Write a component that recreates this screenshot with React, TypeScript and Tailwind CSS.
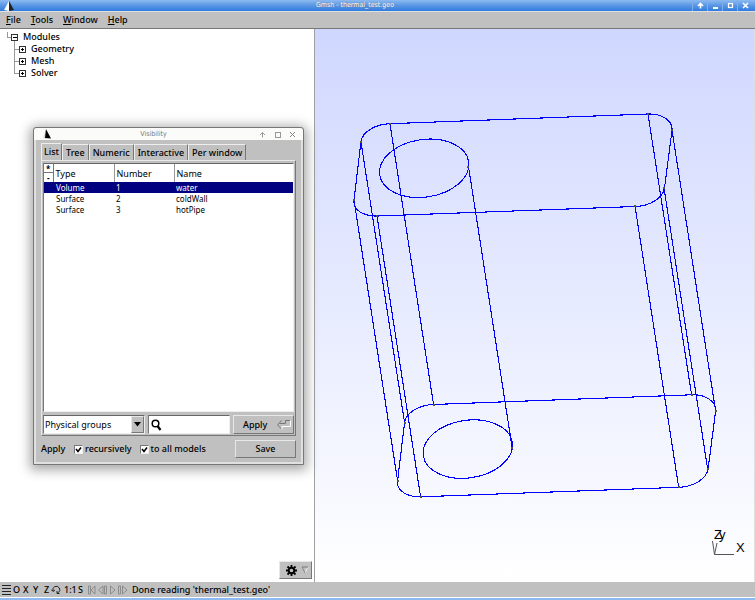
import React from 'react';

const menus = ['File', 'Tools', 'Window', 'Help'];
const tabs = ['List', 'Tree', 'Numeric', 'Interactive', 'Per window'];
const modules = ['Geometry', 'Mesh', 'Solver'];

const groups = [
  { type: 'Volume', number: 1, name: 'water' },
  { type: 'Surface', number: 2, name: 'coldWall' },
  { type: 'Surface', number: 3, name: 'hotPipe' },
];

const vertices = [
  [390, 124], [648, 114], [672, 130], [664, 188], [635, 206], [377, 216], [354, 200], [361, 142],
];

const raised = 'bg-[#c0c0c0] border border-t-[#e8e8e8] border-l-[#e8e8e8] border-b-[#777] border-r-[#777]';

const GmshLogo: React.FC = () => (
  <svg width="12" height="10" viewBox="0 0 12 10" aria-hidden="true">
    <path d="M6 0 L1 9 L6 10 Z" fill="#fff" />
    <path d="M6 0 L6 10 L11 9 Z" fill="#222" />
  </svg>
);

const TreeRoot: React.FC = () => (
  <svg width="23" height="12" fill="none" shapeRendering="crispEdges" aria-hidden="true">
    <path d="M7.5 1V6.5H11M14.5 10V12" stroke="#999" />
    <rect x="11.5" y="3.5" width="6" height="6" stroke="#333" />
    <path d="M13 6.5H17" stroke="#000" />
  </svg>
);

const TreeChild: React.FC<{ last: boolean }> = ({ last }) => (
  <svg width="31" height="12" fill="none" shapeRendering="crispEdges" aria-hidden="true">
    <path d={last ? 'M14.5 0V6.5H19' : 'M14.5 0V12M14.5 6.5H19'} stroke="#999" />
    <rect x="19.5" y="3.5" width="6" height="6" stroke="#333" />
    <path d="M21 6.5H24M22.5 5V8" stroke="#000" />
  </svg>
);

const Check: React.FC<{ label: string }> = ({ label }) => (
  <label className="flex items-center gap-[2px]">
    <span className="grid h-[9px] w-[9px]">
      <input
        type="checkbox"
        defaultChecked
        className="peer col-start-1 row-start-1 h-[9px] w-[9px] appearance-none border border-t-[#777] border-l-[#777] border-b-[#eee] border-r-[#eee] bg-white"
      />
      <svg viewBox="0 0 9 9" className="pointer-events-none invisible col-start-1 row-start-1 h-[9px] w-[9px] peer-checked:visible">
        <path d="M2 4 L4 6.5 L7 2.5" fill="none" stroke="#000" strokeWidth="1.6" />
      </svg>
    </span>
    <span>{label}</span>
  </label>
);

const TitleBar: React.FC = () => (
  <header className="flex h-[11px] items-center bg-gradient-to-b from-[#8dbaf1] via-[#5997e4] to-[#2f7be0]">
    <div className="flex w-[63px] pl-[3px]">
      <GmshLogo />
    </div>
    <h1 className="flex-1 pr-[45px] text-center font-['DejaVu_Sans_Condensed','DejaVu_Sans',sans-serif] text-[7px] leading-[11px] font-normal text-white [text-shadow:0_0_1px_#124,0_0_1px_#fff]">
      Gmsh - thermal_test.geo
    </h1>
    <div className="flex w-[63px]">
      <button aria-label="Shade" className="flex h-[11px] w-[15px] items-center justify-center border-l border-[#7fb0ee]">
        <svg width="7" height="7" stroke="#fff" strokeWidth="1.6" fill="none"><path d="M3.5 6.5V1.5M1 4L3.5 1.5L6 4" /></svg>
      </button>
      <button aria-label="Minimize" className="flex h-[11px] w-[15px] items-center justify-center border-l border-[#7fb0ee]">
        <svg width="7" height="7"><path d="M1 6H6" stroke="#fff" strokeWidth="2" /></svg>
      </button>
      <button aria-label="Maximize" className="flex h-[11px] w-[15px] items-center justify-center border-l border-[#7fb0ee]">
        <svg width="7" height="7"><rect x="1.5" y="1.5" width="4" height="4" fill="none" stroke="#fff" strokeWidth="1.2" /></svg>
      </button>
      <button aria-label="Close" className="flex h-[11px] w-[15px] items-center justify-center border-l border-[#7fb0ee]">
        <svg width="7" height="7"><path d="M1 1L6 6M6 1L1 6" stroke="#fff" strokeWidth="1.6" /></svg>
      </button>
    </div>
  </header>
);

const Wireframe: React.FC = () => (
  <svg viewBox="315 29 439 553" className="h-full w-full" fill="none" aria-label="Model view">
    <g stroke="#0000ff" strokeWidth="1.1" shapeRendering="crispEdges">
      {[[0, 0], [43.6, 280.8]].map(([x, y]) => (
        <g key={x} transform={`translate(${x} ${y})`}>
          <path d="M390 123.7 L648 114 C661 113.5 673 120 672 130.5 L664.5 188 C663 198 650 206 635.5 206.5 L377.5 216 C364 216.5 352.5 210 354 200 L361 141.5 C362.5 132 375 124.2 390 123.7 Z" />
          <ellipse cx="424.2" cy="168.3" rx="45" ry="28.8" transform="rotate(-8.5 424.2 168.3)" />
        </g>
      ))}
      {vertices.map(([x, y]) => (
        <path key={`${x}-${y}`} d={`M${x} ${y} l43.6 280.8`} />
      ))}
      <path d="M468.5 166.5 l43.6 280.8" />
    </g>
    <g fill="#555544">
      {[...vertices, [468, 167]].map(([x, y]) => (
        <g key={`${x}-${y}`}>
          <rect x={x - 1} y={y - 1} width="2" height="2" />
          <rect x={x + 43} y={y + 280} width="2" height="2" />
        </g>
      ))}
    </g>
    {/* axes */}
    <path d="M712.5 541 L714.5 554.5 H734 M717 543 L714.5 554.5" stroke="#555" />
    <g fill="#000" className="font-['Liberation_Sans',sans-serif] text-[13px] font-normal">
      <text x="736" y="552">X</text>
      <text x="714" y="539">Z</text>
      <text x="719" y="539">y</text>
    </g>
  </svg>
);

const VisibilityDialog: React.FC = () => (
  <section
    aria-label="Visibility"
    className="absolute top-[98px] left-[33px] w-[271px] rounded-t-[3px] border border-[#777] bg-[#c0c0c0] shadow-[0_2px_12px_3px_rgba(0,0,0,0.35)]"
  >
    <header className="flex h-3 items-center rounded-t-[3px] bg-[#fbfbf9] text-[#999]">
      <div className="flex w-11 pl-[7px]">
        <svg width="12" height="10" viewBox="0 0 12 10" aria-hidden="true">
          <path d="M5 0 L2 9 L5 10 Z" fill="#ddd" />
          <path d="M5 0 L4 9 L10 9.5 Z" fill="#000" />
        </svg>
      </div>
      <h2 className="flex-1 pr-[30px] text-center font-['DejaVu_Sans_Condensed','DejaVu_Sans',sans-serif] text-[7px] leading-3 font-normal text-[#777]">
        Visibility
      </h2>
      <div className="flex w-11 gap-2">
        <button aria-label="Shade"><svg width="7" height="7" fill="none" stroke="#999"><path d="M3.5 6.5V1.5M1 4L3.5 1.5L6 4" /></svg></button>
        <button aria-label="Maximize"><svg width="7" height="7" fill="none" stroke="#999"><rect x="1.5" y="1.5" width="5" height="5" /></svg></button>
        <button aria-label="Close"><svg width="7" height="7" fill="none" stroke="#888"><path d="M1 1L6 6M6 1L1 6" /></svg></button>
      </div>
    </header>

    <div className="border-2 border-t-0 border-[#e0e0e0] px-[5px] pt-[3px] pb-[4px]">
      <nav className="flex items-end">
        {tabs.map((tab, i) => (
          <button
            key={tab}
            className={
              i === 0
                ? 'h-[17px] border border-b-0 border-t-[#eee] border-l-[#eee] border-r-[#777] px-[2px]'
                : 'h-4 border border-b-0 border-t-[#eee] border-l-[#eee] border-r-[#777] px-[3px]'
            }
          >
            {tab}
          </button>
        ))}
      </nav>

      <div className="border border-t-[#e8e8e8] border-l-[#e8e8e8] border-b-[#777] border-r-[#777] px-px pt-[2px] pb-px">
        <div className="h-[249px] border border-t-[#666] border-l-[#777] border-b-[#eee] border-r-[#eee] bg-white">
          <table className="w-full table-fixed border-collapse text-left leading-[11px] font-normal">
            <colgroup>
              <col className="w-[9px]" />
              <col className="w-[61px]" />
              <col className="w-[60px]" />
              <col />
            </colgroup>
            <thead>
              <tr>
                <th className="border-r border-[#777] p-0 text-center text-[8px] font-bold">
                  <button className="block h-[9px] w-full border-b border-[#777] leading-[9px]">*</button>
                  <button className="block h-[9px] w-full leading-[8px]">-</button>
                </th>
                <th className="border-r border-[#999] p-0 pl-[2px] font-normal">Type</th>
                <th className="border-r border-[#999] p-0 pl-[2px] font-normal">Number</th>
                <th className="p-0 pl-[2px] font-normal">Name</th>
              </tr>
            </thead>
            <tbody className="text-[8px]">
              {groups.map((g, i) => (
                <tr key={g.number} className={i === 0 ? 'bg-[#000080] text-white' : ''}>
                  <td colSpan={2} className="p-0 pl-3">{g.type}</td>
                  <td className="p-0 pl-[2px]">{g.number}</td>
                  <td className="p-0 pl-[2px]">{g.name}</td>
                </tr>
              ))}
            </tbody>
          </table>
        </div>

        <div className="mt-[3px] flex h-[19px] gap-[3px]">
          <div className="relative w-[102px]">
            <select aria-label="Browse mode" className="h-full w-full appearance-none border border-t-[#666] border-l-[#777] border-b-[#eee] border-r-[#eee] bg-white pl-px font-normal">
              <option>Physical groups</option>
            </select>
            <span className={`pointer-events-none absolute top-px right-px flex h-[17px] w-[13px] items-center justify-center ${raised}`}>
              <svg width="7" height="5"><path d="M0 0H7L3.5 4.5Z" fill="#000" /></svg>
            </span>
          </div>
          <label className="flex w-[82px] items-center border border-t-[#666] border-l-[#777] border-b-[#eee] border-r-[#eee] bg-white pl-[2px]">
            <svg width="11" height="12" fill="none" stroke="#000" aria-hidden="true">
              <circle cx="4.5" cy="4.5" r="3.3" strokeWidth="1.5" />
              <path d="M6.5 7L9.5 11" strokeWidth="2.2" />
            </svg>
            <input aria-label="Search" className="min-w-0 flex-1 bg-transparent outline-none" />
          </label>
          <button className={`flex flex-1 items-center justify-between pl-[9px] ${raised}`}>
            Apply
            <svg width="17" height="12" fill="none" aria-hidden="true">
              <path d="M5.5 1.5L1.5 6L5.5 10M3.5 4.5H9.5V1.5H14" stroke="#777" />
              <path d="M14.5 1.5V7.5H6V10.5" stroke="#fff" />
            </svg>
          </button>
        </div>
      </div>

      <div className="mt-[4px] flex items-center">
        <span className="w-[33px]">Apply</span>
        <div className="flex flex-1 gap-2">
          <Check label="recursively" />
          <Check label="to all models" />
        </div>
        <button className={`h-[18px] w-[61px] ${raised}`}>Save</button>
      </div>
    </div>
  </section>
);

const StatusBar: React.FC = () => (
  <footer className="border-b-2 border-[#8dbaf1]">
    <div className="flex h-[15px] items-center bg-[#c0c0c0] pl-[2px]">
      <button aria-label="Options" className="w-[11px]">
        <svg width="9" height="11" stroke="#222" shapeRendering="crispEdges"><path d="M0 1.5H9M0 4.5H9M0 7.5H9M0 10.5H9" /></svg>
      </button>
      <button className="w-[10px] text-left">O</button>
      <button className="w-[10px] text-left">X</button>
      <button className="w-[11px] text-left">Y</button>
      <button className="w-[7px] text-left">Z</button>
      <button aria-label="Rotate" className="w-[13px]">
        <svg width="10" height="10" fill="none" stroke="#222">
          <path d="M2 6A3.5 3.5 0 1 1 7.5 7.5L6 8.500M0 4.500L2 6.500L4 5M6 6V8.500H8.500" />
        </svg>
      </button>
      <button className="w-[14px] text-left">1:1</button>
      <button className="w-[10px] text-left">S</button>
      <div className="flex w-[44px]">
        <svg width="40" height="10" fill="none" stroke="#8c8c8c" aria-hidden="true">
          <path d="M0.5 1V9H2.5V1ZM7 1L3 5L7 9Z" />
          <path d="M15 1L10.5 5L15 9ZM16.5 1H18.5V9H16.5Z" />
          <path d="M22.5 1L27 5L22.5 9Z" />
          <path d="M30.5 1H32.5V9H30.5ZM34.5 1L39 5L34.5 9Z" />
        </svg>
      </div>
      <output>Done reading 'thermal_test.geo'</output>
    </div>
    <div className="h-px bg-white" />
  </footer>
);

const App: React.FC = () => (
  <div className="flex min-h-screen flex-col bg-white font-['Noto_Sans',sans-serif] text-[9px] leading-3 font-medium text-black">
    <TitleBar />
    <nav className="flex h-[18px] items-center gap-[10px] border-t border-b border-t-[#e0e0e0] border-b-[#777] bg-[#c0c0c0] pl-[6px]">
      {menus.map((menu) => (
        <button key={menu}>
          <u>{menu[0]}</u>
          {menu.slice(1)}
        </button>
      ))}
    </nav>

    <main className="relative flex flex-1">
      <aside className="flex w-[315px] shrink-0 flex-col justify-between border-r border-[#a0a0a0] pt-[2px] pb-[3px]">
        <ul className="leading-3">
          <li>
            <div className="flex"><TreeRoot />Modules</div>
            <ul>
              {modules.map((m, i) => (
                <li key={m} className="flex">
                  <TreeChild last={i === modules.length - 1} />
                  {m}
                </li>
              ))}
            </ul>
          </li>
        </ul>
        <button aria-label="Module options" className={`mr-[2px] flex h-[18px] w-[33px] items-center gap-1 self-end pl-[6px] ${raised}`}>
          <svg width="11" height="11" fill="none" stroke="#000">
            <circle cx="5.5" cy="5.5" r="2.8" strokeWidth="2" />
            <path d="M5.5 0V2M5.5 9V11M0 5.5H2M9 5.5H11M1.5 1.5L3 3M8 8L9.5 9.5M9.5 1.5L8 3M3 8L1.5 9.5" strokeWidth="1.8" />
          </svg>
          <svg width="8" height="8" fill="none"><path d="M7 1L4 7L1 1" stroke="#eee" /><path d="M4 7L1 1H7" stroke="#777" /></svg>
        </button>
      </aside>
      <div className="min-w-0 flex-1 border-r border-[#e0e0e0] bg-gradient-to-b from-[#d0d7ff] to-white">
        <Wireframe />
      </div>
      <VisibilityDialog />
    </main>

    <StatusBar />
  </div>
);

export default App;
